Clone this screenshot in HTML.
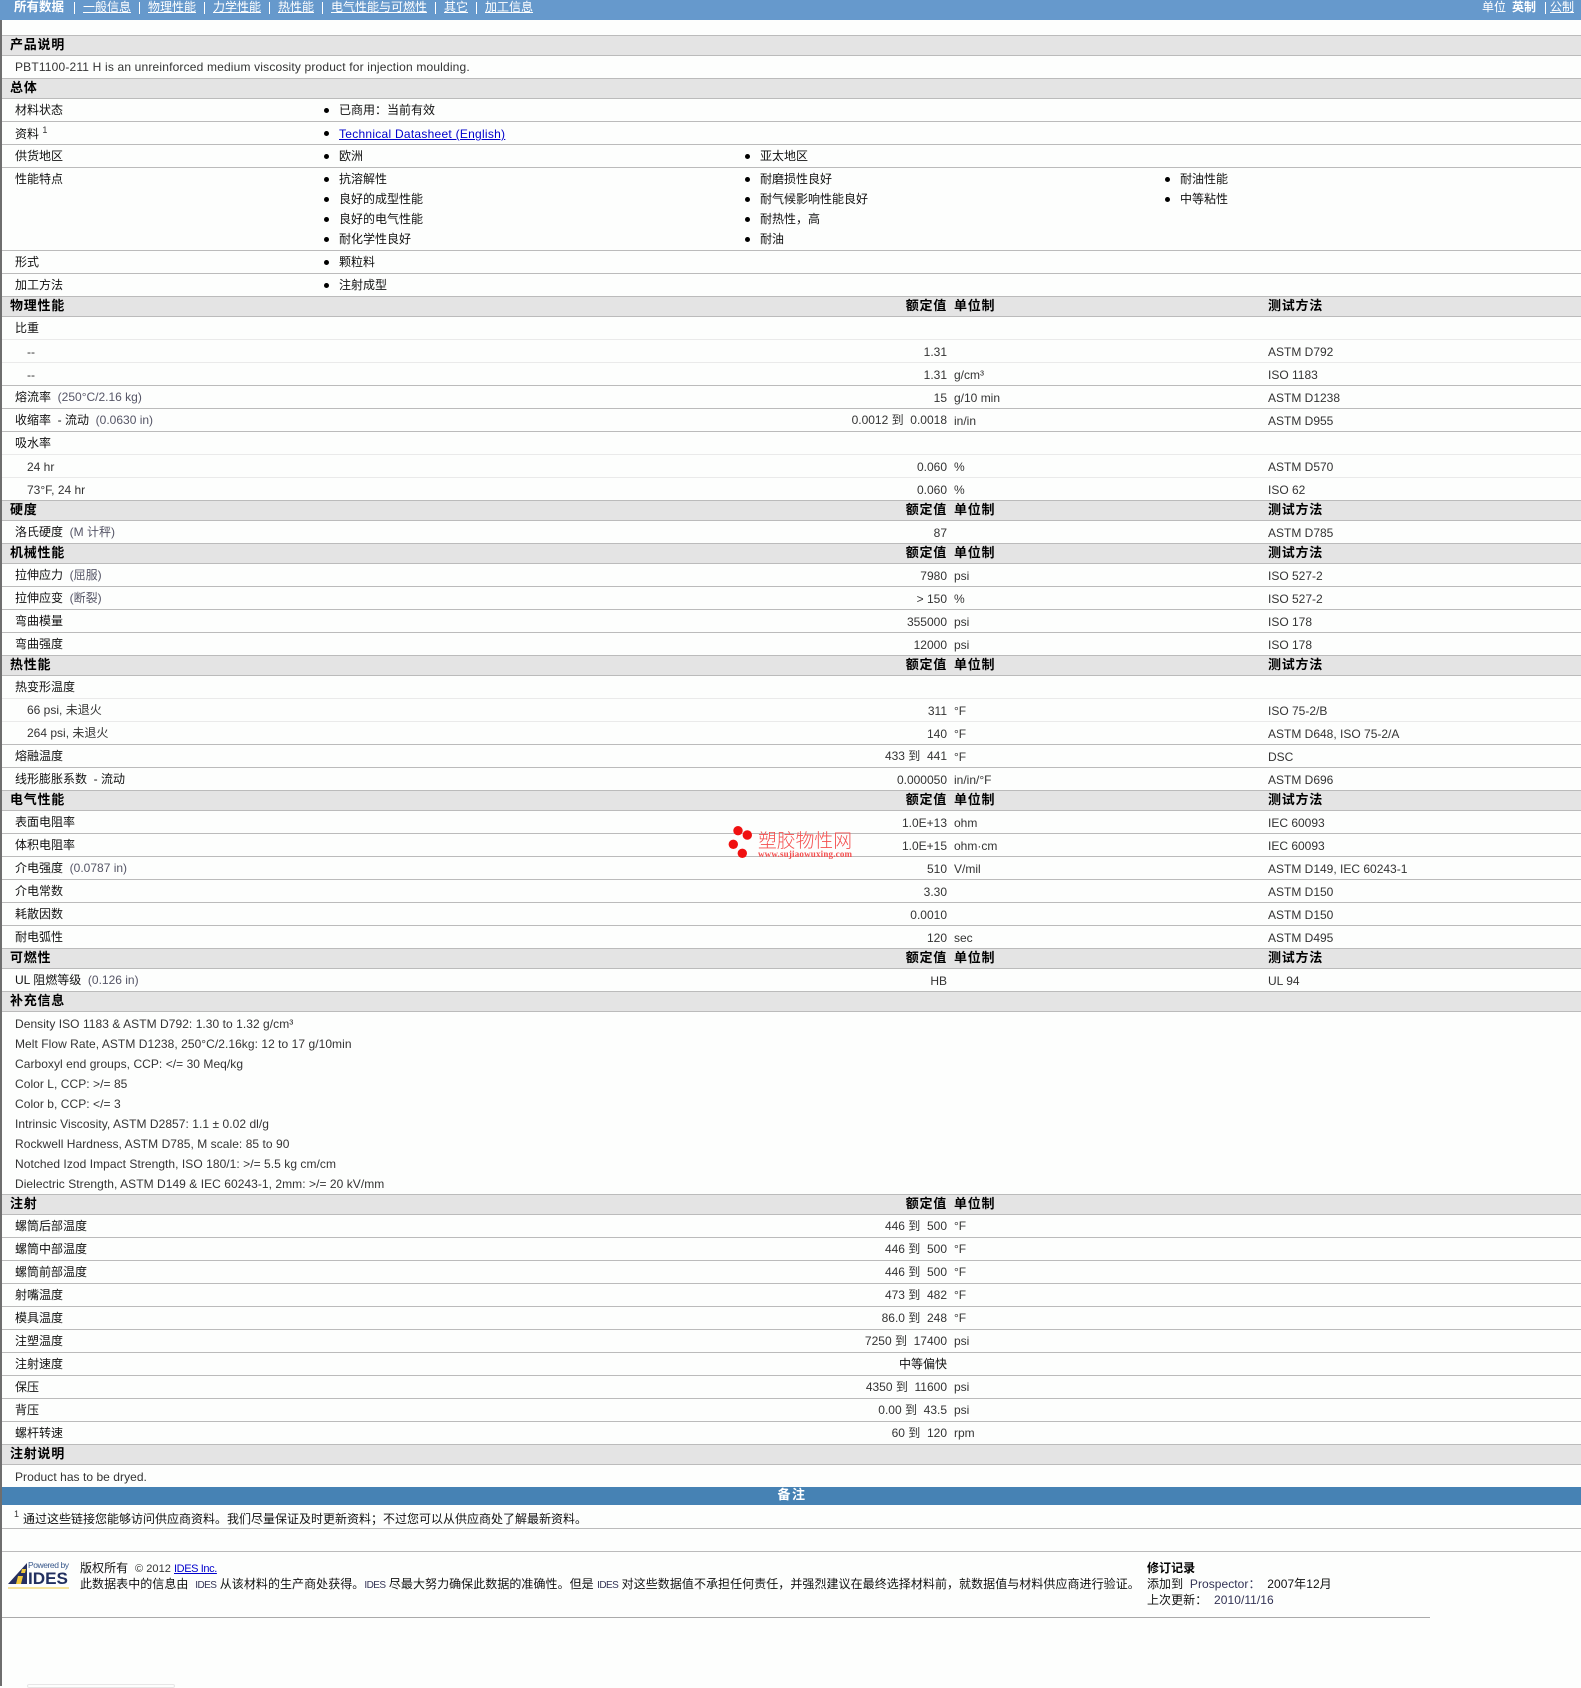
<!DOCTYPE html>
<html lang="zh"><head><meta charset="utf-8"><title>PBT1100-211 H</title>
<style>
html,body{margin:0;padding:0;background:#fdfefd}
body{position:relative;width:1581px;height:1686px;overflow:hidden;font:12px/22px "Liberation Sans","Noto Sans CJK SC",sans-serif;color:#111}
#bar{position:absolute;left:0;top:0;width:1581px;height:20px;background:#6699cc;color:#fff}
#bar span,#bar a{position:absolute;top:-4px;color:#fff;white-space:nowrap}
#bar a{text-decoration:underline}
#bar i{position:absolute;top:2px;width:1px;height:12px;background:#fff}
#lb{position:absolute;left:0;top:20px;width:2px;height:1666px;background:#6e6e6e;z-index:5}
.h,.r,.x{position:absolute;left:0;width:1581px;box-sizing:border-box}
.h{height:21px;background:#e4e4e4;border-top:1px solid #bbb;border-bottom:1px solid #bbb}
.h span{position:absolute;top:-2px;font-weight:bold;font-size:13px;letter-spacing:.75px;white-space:nowrap;line-height:22px;color:#000}
.h .t{left:10px}
.h .v{left:auto;right:634px;letter-spacing:.75px}
.r{height:23px;border-bottom:1px solid #bbb}
.r.q{border-bottom-color:#eaeaea}
.r span{position:absolute;top:0;white-space:nowrap;line-height:22px}
.l{left:15px}.s{left:27px;color:#333}
.v{right:634px;color:#333}.u{left:954px;color:#333}.m{left:1268px;color:#333}
.r span.v,.r span.u,.r span.m,.r span.s{top:1px}
.r span.s.n,.r span.v.n,.r.z span{top:0}
.g{position:static!important;color:#556}
.c{color:#111}
.p{left:339px}.p2{left:760px}.p3{left:1180px}
.b{position:absolute;width:5px;height:5px;border-radius:50%;background:#000}
.x{white-space:nowrap;line-height:20px;color:#333;letter-spacing:.05px}
.x span{position:absolute;white-space:nowrap}
.x .d{position:static;font-size:10px;color:#335;letter-spacing:-.55px}
.tc{position:static!important;font-family:"Noto Sans CJK TC",sans-serif}
sup{font-size:9px;line-height:0;color:#333}
a{color:#00c}
</style></head><body>
<div id="lb"></div>
<div id="bar">
<span style="left:14px;font-weight:bold;font-size:12.5px">所有数据</span><i style="left:74px"></i>
<a style="left:83px">一般信息</a><i style="left:139px"></i>
<a style="left:148px">物理性能</a><i style="left:204px"></i>
<a style="left:213px">力学性能</a><i style="left:269px"></i>
<a style="left:278px">热性能</a><i style="left:322px"></i>
<a style="left:331px">电气性能与可燃性</a><i style="left:435px"></i>
<a style="left:444px">其它</a><i style="left:476px"></i>
<a style="left:485px">加工信息</a>
<span style="left:1482px">单位</span><span style="left:1512px;font-weight:bold">英制</span><i style="left:1545px"></i><a style="left:1550px">公制</a>
</div>

<div class="h" style="top:35px"><span class="t">产品说明</span></div>
<div class="r" style="top:56px;border-bottom:none"><span class="l" style="color:#333;letter-spacing:.17px">PBT1100-211 H is an unreinforced medium viscosity product for injection moulding.</span></div>
<div class="h" style="top:78px"><span class="t">总体</span></div>

<div class="r" style="top:99px"><span class="l">材料状态</span><i class="b" style="left:324px;top:9px"></i><span class="p">已商用<span class="tc">：</span>当前有效</span></div>
<div class="r" style="top:122px"><span class="l" style="top:1px">资料 <sup>1</sup></span><i class="b" style="left:324px;top:9px"></i><span class="p" style="top:1px"><a href="#" style="color:#00c;letter-spacing:.26px">Technical Datasheet (English)</a></span></div>
<div class="r" style="top:145px"><span class="l">供货地区</span><i class="b" style="left:324px;top:9px"></i><span class="p">欧洲</span><i class="b" style="left:745px;top:9px"></i><span class="p2">亚太地区</span></div>
<div class="r" style="top:168px;height:83px"><span class="l">性能特点</span>
<i class="b" style="left:324px;top:9px"></i><span class="p">抗溶解性</span>
<i class="b" style="left:324px;top:29px"></i><span class="p" style="top:20px">良好的成型性能</span>
<i class="b" style="left:324px;top:49px"></i><span class="p" style="top:40px">良好的电气性能</span>
<i class="b" style="left:324px;top:69px"></i><span class="p" style="top:60px">耐化学性良好</span>
<i class="b" style="left:745px;top:9px"></i><span class="p2">耐磨损性良好</span>
<i class="b" style="left:745px;top:29px"></i><span class="p2" style="top:20px">耐气候影响性能良好</span>
<i class="b" style="left:745px;top:49px"></i><span class="p2" style="top:40px">耐热性，高</span>
<i class="b" style="left:745px;top:69px"></i><span class="p2" style="top:60px">耐油</span>
<i class="b" style="left:1165px;top:9px"></i><span class="p3">耐油性能</span>
<i class="b" style="left:1165px;top:29px"></i><span class="p3" style="top:20px">中等粘性</span>
</div>
<div class="r" style="top:251px"><span class="l">形式</span><i class="b" style="left:324px;top:9px"></i><span class="p">颗粒料</span></div>
<div class="r" style="top:274px"><span class="l">加工方法</span><i class="b" style="left:324px;top:9px"></i><span class="p">注射成型</span></div>

<div class="h" style="top:296px"><span class="t">物理性能</span><span class="v">额定值</span><span class="u">单位制</span><span class="m">测试方法</span></div>
<div class="r q" style="top:317px"><span class="l">比重</span></div>
<div class="r q" style="top:340px"><span class="s">--</span><span class="v">1.31</span><span class="m">ASTM D792</span></div>
<div class="r" style="top:363px"><span class="s">--</span><span class="v">1.31</span><span class="u">g/cm³</span><span class="m">ISO 1183</span></div>
<div class="r" style="top:386px"><span class="l">熔流率 &nbsp;<span class="g">(250°C/2.16 kg)</span></span><span class="v">15</span><span class="u">g/10 min</span><span class="m">ASTM D1238</span></div>
<div class="r" style="top:409px"><span class="l">收缩率 &nbsp;- 流动 &nbsp;<span class="g">(0.0630 in)</span></span><span class="v n">0.0012 到 &nbsp;0.0018</span><span class="u">in/in</span><span class="m">ASTM D955</span></div>
<div class="r q" style="top:432px"><span class="l">吸水率</span></div>
<div class="r q" style="top:455px"><span class="s">24 hr</span><span class="v">0.060</span><span class="u">%</span><span class="m">ASTM D570</span></div>
<div class="r" style="top:478px"><span class="s">73°F, 24 hr</span><span class="v">0.060</span><span class="u">%</span><span class="m">ISO 62</span></div>

<div class="h" style="top:500px"><span class="t">硬度</span><span class="v">额定值</span><span class="u">单位制</span><span class="m">测试方法</span></div>
<div class="r" style="top:521px"><span class="l">洛氏硬度 &nbsp;<span class="g">(M 计秤)</span></span><span class="v">87</span><span class="m">ASTM D785</span></div>

<div class="h" style="top:543px"><span class="t">机械性能</span><span class="v">额定值</span><span class="u">单位制</span><span class="m">测试方法</span></div>
<div class="r" style="top:564px"><span class="l">拉伸应力 &nbsp;<span class="g">(屈服)</span></span><span class="v">7980</span><span class="u">psi</span><span class="m">ISO 527-2</span></div>
<div class="r" style="top:587px"><span class="l">拉伸应变 &nbsp;<span class="g">(断裂)</span></span><span class="v">&gt; 150</span><span class="u">%</span><span class="m">ISO 527-2</span></div>
<div class="r" style="top:610px"><span class="l">弯曲模量</span><span class="v">355000</span><span class="u">psi</span><span class="m">ISO 178</span></div>
<div class="r" style="top:633px"><span class="l">弯曲强度</span><span class="v">12000</span><span class="u">psi</span><span class="m">ISO 178</span></div>

<div class="h" style="top:655px"><span class="t">热性能</span><span class="v">额定值</span><span class="u">单位制</span><span class="m">测试方法</span></div>
<div class="r q" style="top:676px"><span class="l">热变形温度</span></div>
<div class="r q" style="top:699px"><span class="s n">66 psi, 未退火</span><span class="v">311</span><span class="u">°F</span><span class="m">ISO 75-2/B</span></div>
<div class="r" style="top:722px"><span class="s n">264 psi, 未退火</span><span class="v">140</span><span class="u">°F</span><span class="m">ASTM D648, ISO 75-2/A</span></div>
<div class="r" style="top:745px"><span class="l">熔融温度</span><span class="v n">433 到 &nbsp;441</span><span class="u">°F</span><span class="m">DSC</span></div>
<div class="r" style="top:768px"><span class="l">线形膨胀系数 &nbsp;- 流动</span><span class="v">0.000050</span><span class="u">in/in/°F</span><span class="m">ASTM D696</span></div>

<div class="h" style="top:790px"><span class="t">电气性能</span><span class="v">额定值</span><span class="u">单位制</span><span class="m">测试方法</span></div>
<div class="r" style="top:811px"><span class="l">表面电阻率</span><span class="v">1.0E+13</span><span class="u">ohm</span><span class="m">IEC 60093</span></div>
<div class="r" style="top:834px"><span class="l">体积电阻率</span><span class="v">1.0E+15</span><span class="u">ohm·cm</span><span class="m">IEC 60093</span></div>
<div class="r" style="top:857px"><span class="l">介电强度 &nbsp;<span class="g">(0.0787 in)</span></span><span class="v">510</span><span class="u">V/mil</span><span class="m">ASTM D149, IEC 60243-1</span></div>
<div class="r" style="top:880px"><span class="l">介电常数</span><span class="v">3.30</span><span class="m">ASTM D150</span></div>
<div class="r" style="top:903px"><span class="l">耗散因数</span><span class="v">0.0010</span><span class="m">ASTM D150</span></div>
<div class="r" style="top:926px"><span class="l">耐电弧性</span><span class="v">120</span><span class="u">sec</span><span class="m">ASTM D495</span></div>

<div class="h" style="top:948px"><span class="t">可燃性</span><span class="v">额定值</span><span class="u">单位制</span><span class="m">测试方法</span></div>
<div class="r" style="top:969px"><span class="l">UL 阻燃等级 &nbsp;<span class="g">(0.126 in)</span></span><span class="v">HB</span><span class="m">UL 94</span></div>

<div class="h" style="top:991px"><span class="t">补充信息</span></div>
<div class="x" style="top:1014px"><span style="left:15px">Density ISO 1183 &amp; ASTM D792: 1.30 to 1.32 g/cm³</span></div>
<div class="x" style="top:1034px"><span style="left:15px">Melt Flow Rate, ASTM D1238, 250°C/2.16kg: 12 to 17 g/10min</span></div>
<div class="x" style="top:1054px"><span style="left:15px">Carboxyl end groups, CCP: &lt;/= 30 Meq/kg</span></div>
<div class="x" style="top:1074px"><span style="left:15px">Color L, CCP: &gt;/= 85</span></div>
<div class="x" style="top:1094px"><span style="left:15px">Color b, CCP: &lt;/= 3</span></div>
<div class="x" style="top:1114px"><span style="left:15px">Intrinsic Viscosity, ASTM D2857: 1.1 ± 0.02 dl/g</span></div>
<div class="x" style="top:1134px"><span style="left:15px">Rockwell Hardness, ASTM D785, M scale: 85 to 90</span></div>
<div class="x" style="top:1154px"><span style="left:15px">Notched Izod Impact Strength, ISO 180/1: &gt;/= 5.5 kg cm/cm</span></div>
<div class="x" style="top:1174px"><span style="left:15px">Dielectric Strength, ASTM D149 &amp; IEC 60243-1, 2mm: &gt;/= 20 kV/mm</span></div>

<div class="h" style="top:1194px"><span class="t">注射</span><span class="v">额定值</span><span class="u">单位制</span></div>
<div class="r z" style="top:1215px"><span class="l">螺筒后部温度</span><span class="v">446 到 &nbsp;500</span><span class="u">°F</span></div>
<div class="r z" style="top:1238px"><span class="l">螺筒中部温度</span><span class="v">446 到 &nbsp;500</span><span class="u">°F</span></div>
<div class="r z" style="top:1261px"><span class="l">螺筒前部温度</span><span class="v">446 到 &nbsp;500</span><span class="u">°F</span></div>
<div class="r z" style="top:1284px"><span class="l">射嘴温度</span><span class="v">473 到 &nbsp;482</span><span class="u">°F</span></div>
<div class="r z" style="top:1307px"><span class="l">模具温度</span><span class="v">86.0 到 &nbsp;248</span><span class="u">°F</span></div>
<div class="r z" style="top:1330px"><span class="l">注塑温度</span><span class="v">7250 到 &nbsp;17400</span><span class="u">psi</span></div>
<div class="r z" style="top:1353px"><span class="l">注射速度</span><span class="v c">中等偏快</span></div>
<div class="r z" style="top:1376px"><span class="l">保压</span><span class="v">4350 到 &nbsp;11600</span><span class="u">psi</span></div>
<div class="r z" style="top:1399px"><span class="l">背压</span><span class="v">0.00 到 &nbsp;43.5</span><span class="u">psi</span></div>
<div class="r z" style="top:1422px"><span class="l">螺杆转速</span><span class="v">60 到 &nbsp;120</span><span class="u">rpm</span></div>

<div class="h" style="top:1444px"><span class="t">注射说明</span></div>
<div class="x" style="top:1467px"><span style="left:15px">Product has to be dryed.</span></div>

<div style="position:absolute;left:0;top:1487px;width:1581px;box-sizing:border-box;padding-left:3px;height:18px;background:#4682b4;color:#fff;text-align:center;font-weight:bold;font-size:13px;letter-spacing:1.5px;line-height:15px">备注</div>
<div class="r" style="top:1506px"><span class="l" style="left:14px;top:-3px;font-size:9px;color:#333">1</span><span style="left:23px;top:2px">通过这些链接您能够访问供应商资料。我们尽量保证及时更新资料；不过您可以从供应商处了解最新资料。</span></div>
<div class="r" style="top:1529px"></div>

<svg style="position:absolute;left:7px;top:1560px" width="64" height="30" viewBox="0 0 64 30">
<path d="M1 24 L20 3 L20 24 Z" fill="#27305f"/>
<path d="M11 16 L16 16 L14 24 L9 24 Z M15 9 L19 9 L18 13 L14 13 Z" fill="#f2c93a"/>
<rect x="1" y="27" width="61" height="2" fill="#f6e39a"/>
<text x="21" y="8" font-family="Liberation Sans,sans-serif" font-size="8.5" fill="#3a5a8c" textLength="41">Powered by</text>
<text x="21" y="24" font-family="Liberation Sans,sans-serif" font-size="17" font-weight="bold" fill="#22305f" textLength="40" lengthAdjust="spacingAndGlyphs">IDES</text>
</svg>

<div class="x" style="top:1558px;color:#111"><span style="left:80px">版权所有 &nbsp;<span style="position:static;color:#333;font-size:11px">© 2012 <a href="#" style="color:#00c;text-decoration:underline;letter-spacing:-.4px">IDES Inc.</a></span></span></div>
<div class="x" style="top:1574px;color:#111"><span style="left:80px">此数据表中的信息由 &nbsp;<span class="d">IDES</span> 从该材料的生产商处获得。<span class="d">IDES</span> 尽最大努力确保此数据的准确性。但是 <span class="d">IDES</span> 对这些数据值不承担任何责任，并强烈建议在最终选择材料前，就数据值与材料供应商进行验证。</span></div>
<div class="x" style="top:1558px;color:#000;font-weight:bold"><span style="left:1147px">修订记录</span></div>
<div class="x" style="top:1574px;color:#111"><span style="left:1147px">添加到 &nbsp;<span style="position:static;color:#335">Prospector<span class="tc">：</span></span>&nbsp;&nbsp;2007年12月</span></div>
<div class="x" style="top:1590px;color:#111"><span style="left:1147px">上次更新<span class="tc">：</span>&nbsp;&nbsp;<span style="position:static;color:#335">2010/11/16</span></span></div>
<div style="position:absolute;left:0;top:1617px;width:1430px;height:1px;background:#aaa"></div>
<div style="position:absolute;left:27px;top:1684px;width:148px;height:4px;border:1px solid #e6e6e6;border-radius:4px;box-sizing:border-box"></div>

<svg style="position:absolute;left:725px;top:820px;z-index:6" width="135" height="45" viewBox="0 0 135 45">
<circle cx="13" cy="10.7" r="4.7" fill="#f01010"/><circle cx="22.3" cy="15" r="4.7" fill="#f01010"/><circle cx="8.3" cy="24.3" r="4.7" fill="#f01010"/><circle cx="17.3" cy="33.3" r="4.7" fill="#f01010"/>
<text x="33" y="27" font-family="Noto Sans CJK SC,sans-serif" font-size="18.8" font-weight="300" fill="#f45050" textLength="94">塑胶物性网</text>
<text x="33" y="37" font-family="Liberation Serif,serif" font-size="9" font-weight="bold" fill="#f45050" textLength="94">www.sujiaowuxing.com</text>
</svg>
</body></html>
